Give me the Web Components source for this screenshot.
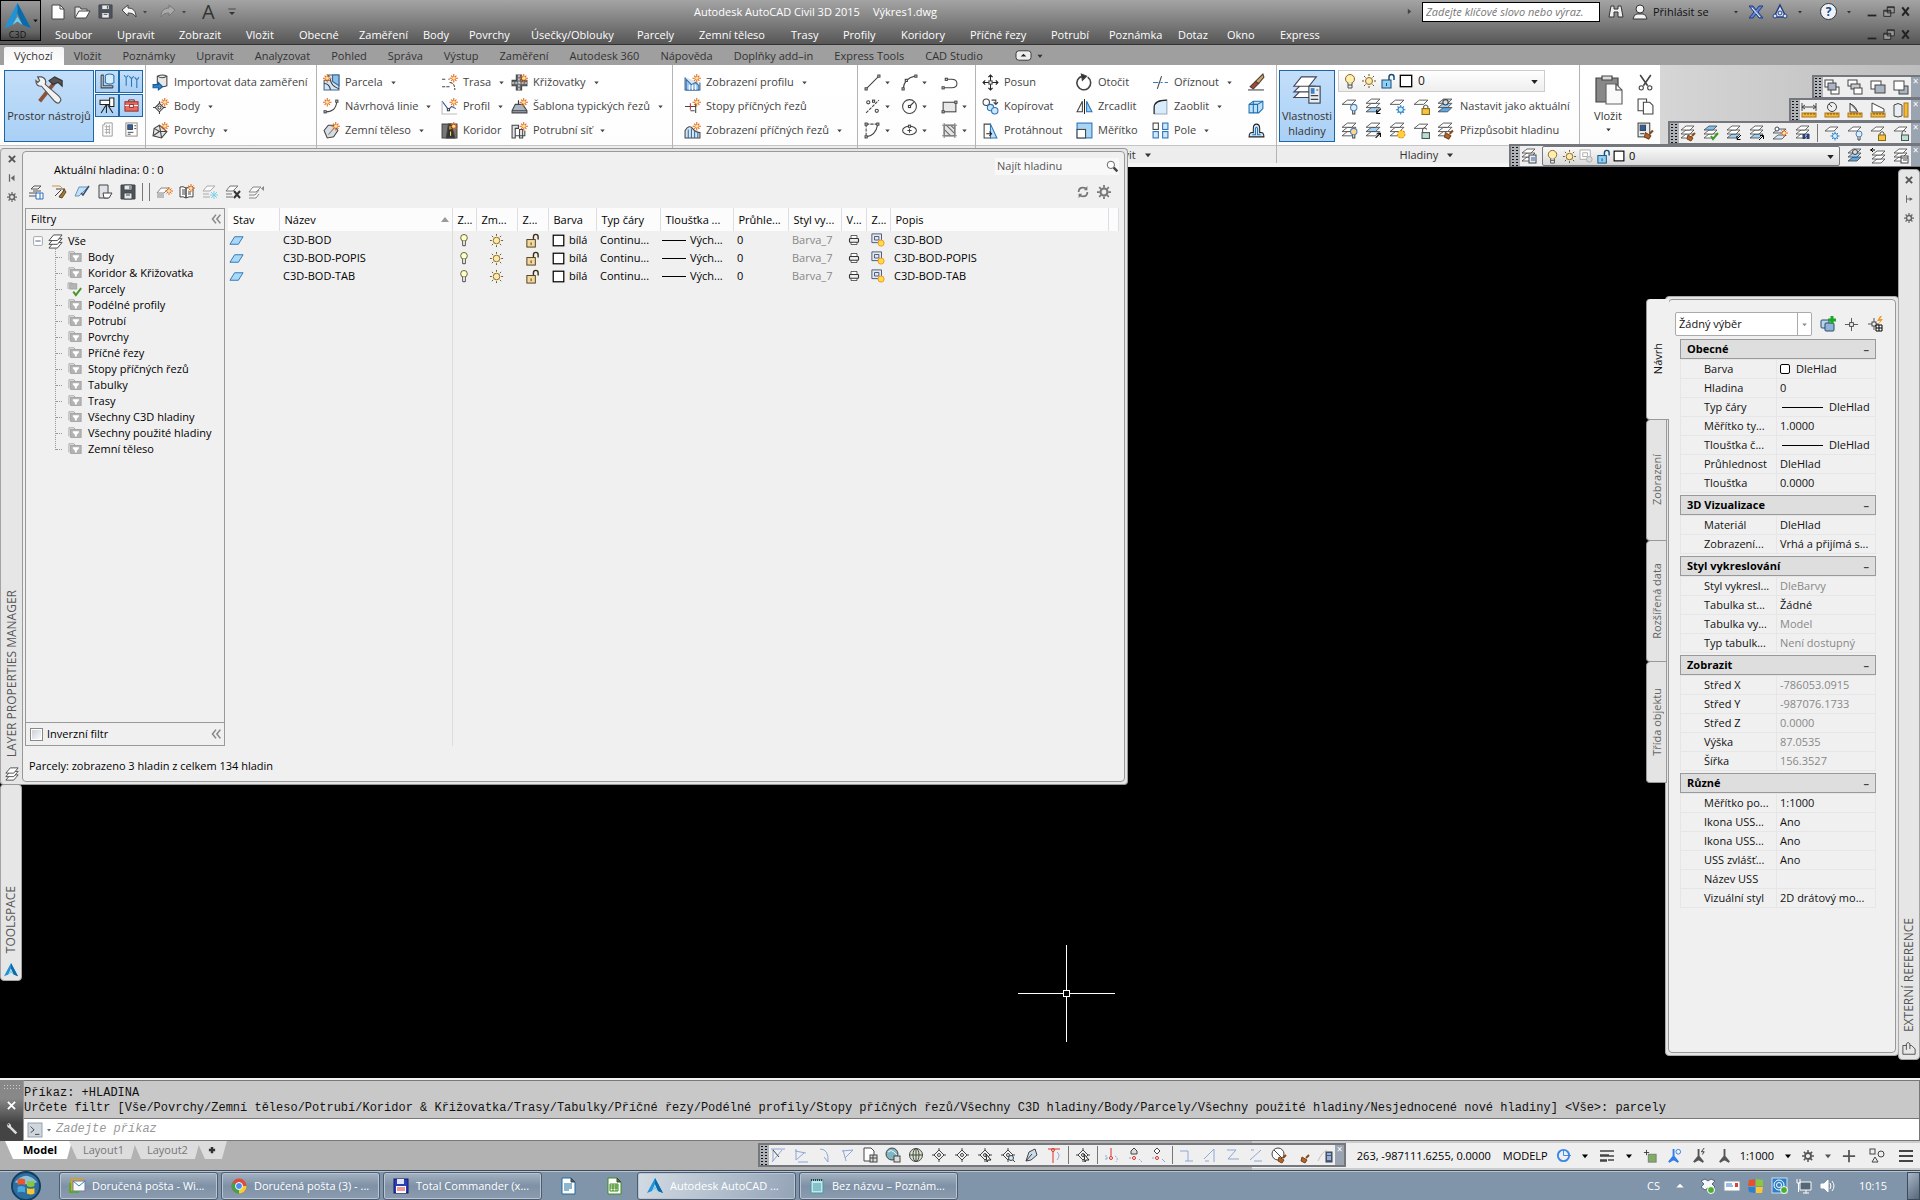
<!DOCTYPE html>
<html lang="cs">
<head>
<meta charset="utf-8">
<title>Autodesk AutoCAD Civil 3D 2015</title>
<style>
    html, body { margin: 0; height: 100%; }
    body { overflow: hidden; background: #000; }
</style>
</head>
<body>
<cad-app></cad-app>

<script>
// ---------- icons ----------
const spark = '<g stroke="#e5661a"><path d="M12 0v8M8 4h8M9.5 1.5l5 5M14.500 1.500l-5 5"/></g><circle cx="12" cy="4" r="1.500" fill="#ffe59a" stroke="none"/>';
const sparkLeft = '<g transform="translate(-8 0)">' + spark + '</g>';
const sheet = (y, f = '#fff') => `<path d="M6 ${y}h8l-4 4H1z" fill="${f}" stroke-width=".8"/>`;
const stack = (a = '#fff', b = '#fff', c = '#fff') => sheet(9, a) + sheet(5, b) + sheet(1, c);
const one = sheet(2);
const lockBadge = '<path d="M10 10V8q2-3 4 0v2" stroke="#555"/><rect x="8.500" y="10" width="7" height="5.500" fill="#f5c443" stroke="#8a6a10"/>';
const openBadge = '<path d="M9 10V7q2-3 4 0" stroke="#555"/><rect x="8.500" y="10" width="7" height="5.500" fill="#bfe0c8" stroke="#456"/>';
const bulbBadge = c => `<circle cx="12" cy="9" r="3" fill="${c}" stroke="#4f7db5"/><path d="M11 12v3h2v-3" fill="#fff"/>`;
const snowBadge = '<g stroke="#2f86cc"><path d="M11 6.500v9M6.500 11h9M8 8l6 6M14 8l-6 6"/><circle cx="11" cy="11" r="2.500" fill="#d7efff"/></g>';
const sunBadge = '<circle cx="11.500" cy="11.500" r="3.500" fill="#ffd23c" stroke="#e88a1c" stroke-dasharray="2 1"/>';
const brushBadge = '<path d="M15 8l-3 3" stroke="#8a4a18" stroke-width="2"/><path d="M8 10l5 3-2 3-4-2z" fill="#b2642a" stroke="#7a4016"/>';
const arrowBadge = '<path d="M15 10l-4 4M11 11v3.500h3.500" stroke="#000"/>';
const arrowUp = '<path d="M10 15l4-4M11 10.500h3.500V14" stroke="#000"/>';
const node = (x, y) => `<rect x="${x - 1}" y="${y - 1}" width="2" height="2" fill="#fff"/>`;
const cross = '<path d="M8 1v14M1 8h14"/><path d="M8 3l5 5-5 5-5-5z" fill="#f4f4f4"/><circle cx="8" cy="8" r="1.500"/>';
const ruler = '<rect x="1" y="11" width="14" height="4" fill="#f5b93a" stroke="#a9741a"/><path d="M4 11v2M7 11v2M10 11v2M13 11v2" stroke="#7a5210"/>';
const faint = s => `<g stroke="#8fa6d8">${s}</g>`;
const ICONS = {
    logo: '<path d="M8 0L0 15l5-2 3-7 3 7 5 2z" fill="#1f93d6" stroke="none"/><path d="M8 0l8 15-5-2-3-7z" fill="#0d6aa8" stroke="none"/><path d="M5 13l3-2 3 2-3-5z" fill="#6fd0f5" stroke="none"/>',
    new: '<path d="M2 1h8l4 4v10H2z" fill="#fff"/><path d="M10 1v4h4"/>',
    open: '<path d="M1 14V3h5l1 2h6v2" fill="#e8e8e8"/><path d="M1 14l4-7h11l-4 7z" fill="#fff"/>',
    save: '<path d="M1 1h14v14H1z" fill="#4b5361"/><path d="M4 1h8v5H4zM4 9h8v6H4z" fill="#e6eaf0"/><path d="M10 2v3M6 11h4"/>',
    undo: '<path d="M1 6l6-5v3c5 0 8 3 8 9-2-3-4-4-8-4v3z" fill="#f4f4f4"/>',
    redo: '<path d="M15 6L9 1v3c-5 0-8 3-8 9 2-3 4-4 8-4v3z" fill="#aaa" stroke="#777"/>',
    down: '<path d="M4 6h8l-4 5z" fill="currentColor" stroke="none"/>',
    downbar: '<path d="M3 4h10" stroke="#333"/><path d="M4 8h8l-4 4z" fill="#333" stroke="none"/>',
    play: '<path d="M5 3l6 5-6 5z" fill="#444" stroke="none"/>',
    min: '<path d="M3 12h10" stroke="#222" stroke-width="2"/>',
    restore: '<path d="M6 2h8v7H6zM2 6h8v7H2z" stroke="#222" fill="#999"/><path d="M6 3h8M2 7h8" stroke="#222"/>',
    close: '<path d="M4 3l8 10M12 3L4 13" stroke="#222" stroke-width="2.500"/>',
    x: '<path d="M3 3l10 10M13 3L3 13" stroke="#555" stroke-width="3"/>',
    pin: '<path d="M4 2v12" stroke="#666" stroke-width="2"/><path d="M12 3v10L6 8z" fill="#666" stroke="none"/>',
    pin2: '<path d="M4 2v12M4 8h8" stroke="#666" stroke-width="1.500"/><path d="M9 5l5 3-5 3z" fill="#666" stroke="none"/>',
    gear: '<circle cx="8" cy="8" r="4" stroke="currentColor" stroke-width="2.500"/><path d="M8 0v3M8 13v3M0 8h3M13 8h3M2.500 2.500l2 2M11.500 11.500l2 2M13.500 2.500l-2 2M2.500 13.500l2-2" stroke="currentColor" stroke-width="2"/>',
    binoc: '<path d="M3 2h3v3h4V2h3l2 11h-5V8H6v5H1z" fill="#eee" stroke="#333"/>',
    user: '<circle cx="8" cy="5" r="4" fill="#f4f4f4" stroke="#333"/><path d="M1 15q1-5 4-5h6q3 0 4 5z" fill="#f4f4f4" stroke="#333"/>',
    xchange: '<path d="M1 2h4l3 4 3-4h4l-5 6 5 6h-4l-3-4-3 4H1l5-6z" fill="#5f82cc" stroke="#1e3d8a"/><path d="M4 4l8 9" stroke="#fff"/>',
    a360: '<path d="M8 1l6 12H2z" fill="#dce6fa" stroke="#27417f" stroke-width="1.500"/><circle cx="8" cy="9" r="2" stroke="#27417f"/><circle cx="3" cy="12" r="2" fill="#dce6fa" stroke="#27417f"/><circle cx="13" cy="12" r="2" fill="#dce6fa" stroke="#27417f"/>',
    tools: '<path d="M3 14L11 4" stroke="#8d5238" stroke-width="2"/><path d="M8 3l3-2 4 2v3l-2-2-3 1z" fill="#555" stroke="#333" stroke-width=".6"/><path d="M2 1l1 2-1 1-1-1q0 3 3 3l7 8q2 2 3 0 1-1-1-3L6 5q1-3-2-4z" fill="#f2f2f2" stroke="#555" stroke-width=".6"/>',
    ts1: '<path d="M2 2v12h11M2 2h2v10h9v2"/><ellipse cx="10" cy="3" rx="4" ry="2" fill="#d7ecfb" stroke="#2a74b8"/><path d="M6 3v6q4 3 8 0V3" fill="#d7ecfb" stroke="#2a74b8"/>',
    ts2: '<path d="M1 2q2 4 4 0M3 4v8M6 3q2 4 4 0M8 5v8M11 4q2 4 4 0M13 6v8" stroke="#2a74b8"/>',
    survey: '<path d="M1 3h9v4H1zM10 1h4v8h-4z" fill="#fff" stroke="#222"/><path d="M7 7L2 15M7 7v8M8 7l5 8" stroke="#222"/>',
    toolbox: '<path d="M5 4V2h6v2" stroke="#7a2020"/><rect x="1" y="4" width="14" height="10" fill="#e86a60" stroke="#8c2c28"/><path d="M1 8h14" stroke="#fff"/><rect x="6" y="7" width="4" height="3" fill="#fff" stroke="#8c2c28"/>',
    pano: '<path d="M3 15V3h2V1h8v14z" fill="#fff" stroke="#999"/><path d="M5 5h6M5 8h6M5 11h6M7 3v10M10 3v10" stroke="#aaa"/>',
    propsw: '<rect x="2" y="1" width="12" height="14" fill="#fff" stroke="#888"/><rect x="4" y="3" width="5" height="5" fill="#2f5fa8"/><path d="M11 4h2M11 7h2M4 11h6M4 13h3"/>',
    import: '<path d="M5 2q5-2 9 0v9q-4 2-9 0z" fill="#e8e8e8"/><path d="M14 2q-4 3-9 0"/><path d="M1 10h5V8l4 4-4 3v-2H1z" fill="#2a86d0" stroke="#1a5c98"/>',
    points: '<path d="M7 3v12M1 9h12"/><path d="M7 5l4 4-4 4-4-4z" fill="#fff"/><circle cx="7" cy="9" r="1.500"/>' + spark,
    surfaces: '<path d="M2 6l5-3 7 6-5 6-8-2z" fill="#e6e6e6"/><path d="M7 3l2 12M2 6l5 3 7 0M1 13l6-4"/>' + spark,
    parcel: '<path d="M1 6h4V1h10v14H1z" fill="#d4e6f4" stroke="#38678f"/><path d="M1 9q5 0 6 6M7 5q0 6 8 9" stroke="#333"/><path d="M9 1v6l6 4V1z" fill="#8cc0ea" stroke="#38678f"/>' + sparkLeft,
    feature: '<path d="M1 13q11 1 12-10"/>' + node(13, 3) + node(2, 13) + sparkLeft,
    grading: '<path d="M1 8l4-5h5l4 5-4 6-6 1z" fill="#d9dde2"/><path d="M5 12l6-7" stroke="#888"/>' + spark,
    align: '<path d="M1 5h4M7 5h1M8 8q5 0 5 7" stroke-dasharray="3 1"/><path d="M1 12h8" stroke-dasharray="3 1"/>' + spark,
    profile: '<path d="M1 3l6 8 3-3 4 2" stroke="#2a5fa8"/><path d="M1 3v12h14" stroke="#bbb"/>' + node(7, 11) + spark,
    corridor: '<path d="M1 2h14v13H1z" fill="#777"/><path d="M5 15l2-13h3l3 13z" fill="#333"/><path d="M8.500 4v3M9 9v4" stroke="#ffe14a"/>' + spark,
    intersect: '<path d="M5 1h5v5h5v5h-5v4H5v-4H1V6h4z" fill="#63686e"/><path d="M7.500 1v14M1 8.500h14" stroke="#fff" stroke-dasharray="2 1"/>' + spark,
    assembly: '<path d="M7 2v10" stroke="#333"/><path d="M1 12l3-6h7l4 6v2H1z" fill="#a7b5c4"/><path d="M1 12h14"/>' + spark,
    pipes: '<path d="M1 3h6v3H4v9H1zM8 7h3v8H8z" fill="#dfe5ea"/><path d="M4 13h9V8"/>' + spark,
    profview: '<path d="M1 3v12h14V8" fill="#d5e6f5" stroke="#39699c"/><path d="M2 5l5 5 4-2 3 3v4H2z" fill="#9cc5e8" stroke="#39699c"/><path d="M5 10v5M8 10v5M11 10v5" stroke="#fff"/>' + spark,
    sample: '<path d="M1 8h10M11 4v10M6 12h4"/><path d="M6 5v6" stroke="#c33"/>' + spark,
    secview: '<path d="M1 15V8q4-6 7-2t7 4v5z" fill="#d5e6f5"/><path d="M4 7v8M7 6v9M10 8v7M13 9v6" stroke="#39699c"/>' + spark,
    line: '<path d="M2 14L14 2"/>' + node(2, 14) + node(14, 2),
    arc: '<path d="M2 14Q3 4 13 2"/>' + node(2, 14) + node(5, 6) + node(14, 2),
    pline: '<path d="M2 13h8q5 0 5-4t-5-4H4"/>' + node(2, 13) + node(5, 5),
    div: '<path d="M2 14L14 2" stroke-dasharray="3 1"/><circle cx="4" cy="4" r="1.500"/><circle cx="12" cy="12" r="1.500"/>' + node(9, 3),
    circle: '<circle cx="8" cy="8" r="6.500"/><path d="M8 8l4-4"/>' + node(8, 8),
    rect: '<rect x="2" y="4" width="12" height="9" fill="#e8e8e8"/>' + node(14, 4) + node(2, 13),
    spline: '<path d="M2 2h11M2 2v11" stroke-dasharray="3 1"/><path d="M2 14q9-1 11-12"/>' + node(2, 2) + node(13, 2) + node(2, 14),
    ellipse: '<ellipse cx="8" cy="8" rx="6.500" ry="4"/><path d="M8 6v4M6 8h4"/>' + node(8, 4),
    hatch: '<rect x="3" y="3" width="10" height="10" fill="#e4e4e4"/><path d="M3 7l6 6M5 3l8 8M9 3l4 4" stroke="#666"/><path d="M1 3h14M3 1v14M13 1v14M1 13h14" stroke="#888"/>',
    move: '<path d="M8 1v14M1 8h14M6 3l2-2 2 2M6 13l2 2 2-2M3 6L1 8l2 2M13 6l2 2-2 2" stroke="#222"/><rect x="6.500" y="6.500" width="3" height="3" fill="#fff"/>',
    rotate: '<path d="M6 2a6.500 6.500 0 1 0 5 1" stroke-width="1.500"/><path d="M5 0l5 2-4 4z" fill="#333"/>',
    trim: '<path d="M1 8h5M8 8h2M12 8h3" stroke="#3a78b8"/><path d="M9 2L5 14"/>',
    erase: '<path d="M14 0l1 3-5 6-3-2z" fill="#d9a35a"/><path d="M7 7l3 2-5 5-3-2z" fill="#b4422a"/><path d="M0 15h15"/>',
    copy: '<circle cx="4" cy="4" r="3" fill="#fff"/><circle cx="8" cy="9" r="3" fill="#cfe8fb" stroke="#2a74b8"/><circle cx="12" cy="12" r="3" fill="#cfe8fb" stroke="#2a74b8"/><path d="M9 2h4v3M11 4l2 2 2-2"/>',
    mirror: '<path d="M8 1v14" stroke="#222"/><path d="M6 3v10H1z" fill="#fff"/><path d="M10 3v10h5z" fill="#9fd0f5" stroke="#2a74b8"/>',
    fillet: '<path d="M2 15V9q0-7 12-7v13z" fill="#d9ecfb" stroke="#9ab"/><path d="M2 15V9q0-7 12-7" stroke="#222"/>',
    explode: '<path d="M1 6l4-3h9v7l-4 4H1z" fill="#bfe2fa" stroke="#1f6fb0"/><path d="M1 6h8v8M9 6l5-3M5 3v11" stroke="#1f6fb0"/>',
    stretch: '<path d="M2 2h6v13H2z" fill="#fff"/><path d="M8 2l6 13H8z" fill="#bfe2fa" stroke="#2a74b8"/><path d="M4 11h5M7 9l2 2-2 2" stroke="#222"/>',
    scale: '<rect x="1" y="1" width="14" height="14" fill="#a9d4f4" stroke="#2a74b8"/><rect x="1" y="7" width="8" height="8" fill="#fff"/>',
    array: '<g fill="#fff"><rect x="1" y="1" width="5" height="6"/><g fill="#cfe8fb" stroke="#2a74b8"><rect x="10" y="1" width="5" height="6"/><rect x="1" y="9" width="5" height="6"/><rect x="10" y="9" width="5" height="6"/></g></g>',
    offset: '<path d="M1 14h14q0-5-4-4V6q0-4-3-4T5 6v4q-4-1-4 4z" fill="#cfe8fb" stroke="#222"/><path d="M4 12h3V6q1-2 2 0v6h3" stroke="#2a74b8"/>',
    layprops: '<g stroke="#445" stroke-width=".6"><path d="M4 9h8l-3 3H1zM4 6h8l-3 3H1zM5 1h8L9 6H1z" fill="#fff"/></g><rect x="9" y="6" width="6" height="9" fill="#e9eef4" stroke="#345" stroke-width=".6"/><rect x="10" y="7" width="2" height="3" fill="#3f7fc4" stroke="none"/><path d="M13 8h1M10 11h4M10 13h4" stroke-width=".6"/>',
    bulb: '<circle cx="8" cy="6" r="4.500" fill="#ffeeb0" stroke="#8a6a20"/><path d="M6 10v5h4v-5" fill="#eee" stroke="#555"/><path d="M6 12h4"/>',
    sun: '<circle cx="8" cy="8" r="3.500" fill="#ffe9a8" stroke="#8a6a20"/><path d="M8 1v2M8 13v2M1 8h2M13 8h2M3 3l1.500 1.500M11.500 11.500L13 13M13 3l-1.500 1.500M3 13l1.500-1.500" stroke="#6a5520"/>',
    lock: '<path d="M9 7V4q0-2.500 2.500-2.500T14 4v3" stroke="#3b2f14" stroke-width="1.500"/><rect x="2" y="7" width="9" height="8" fill="#f3d9a0" stroke="#4a3a14"/><path d="M6.500 10v3" stroke="#4a3a14"/>',
    lockb: '<path d="M9 7V4q0-2.500 2.500-2.500T14 4v3" stroke="#174c78" stroke-width="1.500"/><rect x="2" y="7" width="9" height="8" fill="#8fd0f5" stroke="#174c78"/><path d="M6.500 10v3" stroke="#174c78"/>',
    white: '<rect x="1.500" y="1.500" width="13" height="13" fill="#fff" stroke="#000" stroke-width="1.500"/>',
    l1: one + bulbBadge('#d7efff'), l2: stack('#9fd0f5') + arrowBadge, l3: one + snowBadge, l4: one + lockBadge,
    l5: stack('#5aa7e6', '#9fd0f5', '#cfe8fb') + '<circle cx="8" cy="4" r="2.500" fill="#ddd"/>',
    m1: stack() + bulbBadge('#ffd98a'), m2: stack('#fff', '#9fd0f5') + arrowUp, m3: stack() + sunBadge, m4: one + openBadge, m5: stack() + brushBadge,
    l6: stack('#fff', '#fff', '#7fc0ef') + '<path d="M8 11l2 3 5-6" stroke="#3c9a28" stroke-width="2"/>',
    l7: stack('#9fd0f5', '#fff', '#fff') + arrowUp,
    l8: sheet(10, '#cfe8fb') + sheet(4, '#cfe8fb') + '<circle cx="5" cy="4" r="2" fill="#fff"/><g transform="translate(0 4)">' + spark + '</g>',
    l9: stack() + '<path d="M9 9v5M13 9v5" stroke="#26427a" stroke-width="3"/>',
    l10: stack() + '<rect x="8" y="7" width="7" height="8" fill="#e9eef4"/><path d="M10 10h4M10 12h4" stroke="#2a5fa8"/>',
    l11: '<g transform="translate(1 2)">' + stack() + '</g><path d="M0 2h5M3 0L1 2l2 2" stroke="#000"/>',
    l12: stack() + '<rect x="8" y="8" width="7" height="7" fill="#fff"/><path d="M8 10h7M10 12h4"/>',
    paste: '<path d="M2 2h11v12H2z" fill="#888" stroke="#444" stroke-width=".6"/><path d="M5 1h5v2H5z" fill="#ddd" stroke-width=".6"/><path d="M7 5h5l3 3v7H7z" fill="#fafafa" stroke="#666" stroke-width=".6"/><path d="M12 5v3h3" stroke-width=".6"/>',
    cut: '<path d="M3 1l7 10M13 1L6 11" stroke-width="1.500"/><circle cx="4" cy="13" r="2"/><circle cx="12" cy="13" r="2"/>',
    copyclip: '<path d="M1 1h8v11H1z" fill="#fff"/><path d="M6 4h6l3 3v8H6z" fill="#fff"/>',
    match: '<rect x="1" y="1" width="11" height="13" fill="#e9eef4"/><rect x="3" y="3" width="5" height="5" fill="#2a5fa8"/><path d="M3 11h4"/>' + brushBadge,
    o1: '<rect x="1" y="1" width="8" height="7" fill="#fff"/><rect x="7" y="8" width="8" height="7" fill="#fff"/><rect x="4" y="4" width="8" height="7" fill="#aab4c2"/>',
    o2: '<rect x="1" y="1" width="9" height="6" fill="#fff"/><rect x="4" y="5" width="9" height="5" fill="#c8ced6"/><rect x="7" y="9" width="8" height="6" fill="#fff"/>',
    o3: '<rect x="1" y="2" width="10" height="8" fill="#fff"/><rect x="5" y="6" width="10" height="8" fill="#aab4c2"/>',
    o4: '<rect x="6" y="7" width="9" height="8" fill="#aab4c2"/><rect x="1" y="2" width="10" height="9" fill="#fff"/>',
    q1: '<path d="M1 1v8M15 1v8M1 5h14M4 3L1 5l3 2M12 3l3 2-3 2"/>' + ruler,
    q2: '<circle cx="8" cy="5" r="4.500"/><path d="M8 5L5 2"/>' + ruler, q3: '<path d="M3 10V1l8 9zM3 2q5 1 7 7"/>' + ruler,
    q4: '<path d="M2 10V1l12 6v3z" fill="#fff"/>' + ruler,
    q5: '<path d="M1 3q4-3 8 0v11q-4 2-8 0z" fill="#e8eef4"/><rect x="11" y="1" width="4" height="14" fill="#f5b93a" stroke="#a9741a"/>',
    vp: '<path d="M1 1h11v10H1zM4 4h5v4H4z" fill="#fff" stroke="#aaa"/><circle cx="11" cy="11" r="3" fill="#ddd" stroke="#aaa"/>',
    t1: '<path d="M6 2h7l-3 3H3zM5 7h8M1 12h7M1 9h8" stroke="#555" fill="#f4f4f4"/><path d="M8 9h7v6H8zM12 9v6" stroke="#2a6fc0" fill="#fff"/>',
    t2: '<path d="M1 2h8l2 2" stroke="#c79a3a"/><path d="M5 5h9l-6 8M4 12l6-6"/><path d="M13 5l2 3-4 6-3-1 4-5z" fill="#a8763a" stroke="#6b4a1e"/>',
    t3: '<path d="M5 3h9l-9 9H1z" fill="#bfe2fa" stroke="#6c93b5"/><path d="M7 9l2 2 6-9" stroke="#38506e" stroke-width="1.500"/>',
    t4: '<path d="M2 1h9v13H2z" fill="#dfe3e8"/><path d="M6 9h9l-3 5H7z" fill="#fff"/>',
    n1: '<path d="M5 4h8l-5 5H1zM1 11h7M1 13h7" fill="#fafafa" stroke="#888"/><g transform="translate(1 3)">' + spark + '</g>',
    n2: '<path d="M1 3q3-1 6 1v10q-3-2-6-1zM7 4q3-2 7-1v10q-4-1-7 1z" fill="#fff"/><path d="M3 6h3M3 8h3M3 10h3M9 8h3M9 10h3"/>' + spark,
    n3: '<g stroke="#aaa"><path d="M5 2h8l-5 5H1zM1 10h6M1 13h7" fill="#fafafa"/></g><g stroke="#7fd0ea"><path d="M12 7v8M8 11h8M9 8l6 6M15 8l-6 6"/></g>',
    n4: '<path d="M5 2h8l-5 5H1zM1 10h6M1 13h7" fill="#fafafa" stroke="#777"/><path d="M9 7l6 7M15 7l-6 7" stroke="#333" stroke-width="2"/>',
    n5: '<path d="M5 3h8l-5 5H1zM1 11h6l4-5M1 14h7l3-4" fill="#fafafa" stroke="#888"/><path d="M16 2v5l-3-2.500z" fill="#888" stroke="none"/>',
    search: '<circle cx="6" cy="6" r="4.500" fill="#fff" stroke="#444"/><path d="M9.500 9.500L14 14" stroke="#444" stroke-width="3"/>',
    refresh: '<path d="M3 8q0-5 5-5 3 0 4 2M13 8q0 5-5 5-3 0-4-2" stroke="#777" stroke-width="2"/><path d="M13 1v5H9zM3 15v-5h4z" fill="#777" stroke="none"/>',
    dbl: '<path d="M8 3L4 8l4 5M13 3L9 8l4 5" stroke="#888" stroke-width="1.800"/>',
    minusbox: '<rect x="3" y="3" width="10" height="10" rx="1" fill="#fff" stroke="#999"/><path d="M5 8h6" stroke="#34558b"/>',
    layers: '<path d="M6 9h9l-5 6H1z" fill="#fff"/><path d="M6 5h9l-5 6H1z" fill="#fff"/><path d="M6 1h9l-5 6H1z" fill="#fff"/>',
    folder: '<path d="M1 12V2h6l1 2" stroke="#a5a5a5" fill="#e4e4e4"/><rect x="3" y="4" width="12" height="9" fill="#b4b4b4" stroke="#a0a0a0"/><path d="M5.500 6h7v1.500L10 10v2H8v-2L5.500 7.500z" fill="#fff" stroke="none"/>',
    folderok: '<path d="M0 8V1h5l1 1" stroke="#a5a5a5" fill="#e4e4e4"/><rect x="2" y="2" width="8" height="6" fill="#b4b4b4" stroke="#a0a0a0"/><path d="M6 11l3 4 6-8" stroke="#46952a" stroke-width="2.200"/>',
    status: '<path d="M6 4h9l-5 8H1z" fill="#a9d9f7" stroke="#2a74b8"/>',
    rowbulb: '<circle cx="8" cy="5.500" r="3.800" fill="#ffffc8" stroke="#55502a"/><path d="M6.500 9v5.500h3V9" fill="#fff" stroke="#333"/>',
    printer: '<path d="M4 6V2h8v4M4 10v4h8v-4" fill="#fff" stroke="#333"/><rect x="2" y="6" width="12" height="5" rx="1" fill="#eee" stroke="#333" stroke-width="1.500"/>',
    vpfreeze: '<path d="M1 1h11v10H1zM4 4h5v4H4z" fill="#e4e8f0" stroke="#3d4c6a"/><circle cx="11.500" cy="11.500" r="3.500" fill="#ffdc4a" stroke="#f0901c"/>',
    pick: '<rect x="1" y="4" width="8" height="8" rx="1" fill="#bcd4ea" stroke="#27496f"/><rect x="5" y="7" width="9" height="8" rx="1" fill="#8fb4da" stroke="#27496f"/><path d="M12 0v8M8 4h8" stroke="#1fa52d" stroke-width="3"/>',
    sel: '<path d="M8 1v5M8 10v5M1 8h5M10 8h5" stroke="#555"/><rect x="6" y="6" width="4" height="4"/>',
    qsel: '<path d="M7 2v4M7 10v4M1 8h4M9 8h3" stroke="#555"/><rect x="5" y="6" width="4" height="4"/><path d="M13 0l-3 5h3l-2 4 5-6h-3l2-3z" fill="#f29a2a" stroke="none"/><path d="M9 9h6v6H9zM9 12h6M12 9v6" stroke="#000" fill="#fff"/>',
    extref: '<path d="M5 4H1v10h14V8l-4-4H9" stroke="#444"/><path d="M5 9V2q2-3 4 0v6" stroke="#444"/>',
    b1: faint('<path d="M1 2h14M3 2v12M2 15L12 3"/>') + '<path d="M3 3l6 7" stroke="#444"/>', b2: faint('<path d="M3 2v11M2 4l11 2M3 13l8-7M5 15h10"/>'),
    b3: faint('<path d="M4 2q9 0 8 13l-4-5"/>'), b4: faint('<path d="M4 3l3 11M3 4l11-1-8 8"/>'),
    b5: '<path d="M2 1h7l3 3v10H2z" fill="#fff"/><rect x="8" y="8" width="7" height="7" fill="#ddd"/><path d="M8 11h7M11 8v7"/>',
    b6: '<circle cx="7" cy="7" r="6" fill="#7fb6c4"/><path d="M3 5q3-3 6 0t3 3" stroke="#e8f4f8"/><rect x="9" y="9" width="6" height="6" fill="#ddd"/>',
    b7: '<circle cx="8" cy="8" r="6.500" fill="#d9e6cc"/><ellipse cx="8" cy="8" rx="3" ry="6.500"/><path d="M1.500 8h13M8 1.500v13"/>',
    cross: cross, cross2: cross + '<path d="M9 7l5 6h-3l-1 2z" fill="#fff" stroke="#222"/>', cross3: cross + '<circle cx="11" cy="11" r="2.500" fill="#cfe8fb"/><path d="M13 13l2 2"/>',
    b8: '<path d="M3 14l3-9 6-3 2 6-6 5z" fill="#c9dcec"/><path d="M3 14l6-7"/>',
    b9: '<path d="M2 2h12M7 4v12" stroke="#d8352c"/><circle cx="7" cy="3" r="1.500" stroke="#d8352c"/>' + faint('<path d="M11 5q4 3 0 8"/>'),
    b10: '<path d="M7 1v8" stroke="#d8352c"/><circle cx="7" cy="11" r="1.500" stroke="#d8352c"/>' + faint('<path d="M2 11h2M11 9q4 2 1 6M2 8v5" stroke-dasharray="2 1"/>'),
    b11: '<path d="M4 7V4l3-3 3 3v3z" fill="#ddd"/><circle cx="7" cy="11" r="1.500" stroke="#d8352c"/>' + faint('<path d="M2 11h2M12 12l3 3" stroke-dasharray="2 1"/>'),
    b12: '<path d="M7 1l3 3-3 3-3-3z" fill="#fff"/><circle cx="7" cy="11" r="1.500" stroke="#d8352c"/>' + faint('<path d="M2 11h2M12 12l3 3"/>'),
    b13: faint('<path d="M1 4h8v10M6 14h8"/>'), b14: faint('<path d="M2 12L12 2v13M3 14h4"/>'), b15: faint('<path d="M2 3h9L3 12h11"/>'), b16: faint('<path d="M3 3l3 0M2 13L13 3M6 14h8"/>'),
    b17: '<circle cx="7" cy="7" r="6" fill="#fff"/><path d="M3 3l8 8"/>' + brushBadge, b18: brushBadge,
    b19: '<path d="M1 14q4-9 9-11" stroke="#c4c4c4"/><rect x="9" y="5" width="6" height="10" fill="#3d5f9c"/><path d="M10 7h4M10 10h4M10 12h4" stroke="#fff"/>',
    snap: '<circle cx="8" cy="8" r="6" stroke="#3a86e8" stroke-width="2"/><path d="M8 8h8M8 2v6" stroke="#3a86e8"/>',
    lw: '<path d="M1 3h14M1 7h9M1 8h9M1 12h7M1 13h7M9 8h6M9 12h6" stroke="#444" stroke-width="1.500"/>',
    cyc: '<path d="M1 4h6M4 1v6" stroke="#333"/><rect x="6" y="6" width="9" height="9" fill="#7fae63" stroke="#777"/>',
    ann: '<path d="M8 1v8l5 6-5-3-5 3 5-6z" fill="#555" stroke="#555" stroke-width="2"/>',
    annb: '<path d="M7 1v8l5 6-5-3-5 3 5-6z" fill="#2f7fe6" stroke="#2f7fe6" stroke-width="2"/><circle cx="12" cy="4" r="2.500" stroke="#2f7fe6"/>',
    anna: '<path d="M7 1v8l5 6-5-3-5 3 5-6z" fill="#555" stroke="#555" stroke-width="2"/><path d="M13 0l-3 4h3l-2 3" stroke="#333"/>',
    plus: '<path d="M8 1v14M1 8h14" stroke="#555" stroke-width="2"/>',
    iso: '<rect x="1" y="1" width="5" height="5"/><circle cx="12" cy="6" r="3"/><path d="M3 14l3-5 3 5z"/>',
    burger: '<path d="M1 3h14M1 8h14M1 13h14" stroke="#444" stroke-width="2"/>',
    wrench: '<path d="M2 2l1 4 2 1 7 7 2-2-7-7q0-4-4-4l2 2-1 1z" fill="#ddd" stroke="none"/>',
    prompt: '<rect x="0" y="0" width="16" height="16" fill="#cfd6de" stroke="#8b97a5"/><path d="M3 4l4 4-4 3M8 13h5" stroke="#333"/>',
    add: '<path d="M8 3v10M3 8h10" stroke="#333" stroke-width="4"/>',
    orb: '<circle cx="8" cy="8" r="7.500" fill="#2c6f9f" stroke="#143c5e"/><path d="M2 6q6-7 12 0-6 2-12 0z" fill="#8fc1df" stroke="none"/><path d="M3.500 4.500q2-1 4 0v3q-2-1-4 0z" fill="#e9562c" stroke="none"/><path d="M8.500 5q2 1 4 0v3q-2 1-4 0z" fill="#8cc63e" stroke="none"/><path d="M3.500 8.500q2-1 4 0v3q-2-1-4 0z" fill="#4aa6e0" stroke="none"/><path d="M8.500 9q2 1 4 0v3q-2 1-4 0z" fill="#fbc72e" stroke="none"/>',
    outlook: '<rect x="2" y="1" width="12" height="12" fill="#d9a92a" stroke="#c7a12a"/><rect x="4" y="3" width="12" height="10" fill="#f7fbff" stroke="#77a"/><path d="M4 3l6 5 6-5" stroke="#38a"/><path d="M1 5v9h9" stroke="#5a3" stroke-width="2"/>',
    chrome: '<circle cx="8" cy="8" r="7.500" fill="#dd4b3a" stroke="none"/><path d="M8 8L1.500 4.500A7.500 7.500 0 0 0 8 15.500z" fill="#3fa34c" stroke="none"/><path d="M8 8h7.500A7.500 7.500 0 0 1 8 15.500z" fill="#f7cf2e" stroke="none"/><circle cx="8" cy="8" r="3.500" fill="#4a8cf0" stroke="#fff"/>',
    floppy: '<rect x="1" y="1" width="14" height="14" fill="#2840b4" stroke="#111a66"/><rect x="4" y="1" width="7" height="5" fill="#dfe4f8" stroke="none"/><rect x="3" y="8" width="10" height="7" fill="#fff" stroke="none"/><path d="M4 10h8M4 12h8" stroke="#d33"/>',
    writer: '<path d="M2 0h9l4 4v12H2z" fill="#fff" stroke="#1d6d9e"/><path d="M11 0v4h4z" fill="#1d6d9e"/><path d="M4 6h8M4 8h8M4 10h8M4 12h5" stroke="#1d6d9e"/>',
    calc: '<path d="M2 0h9l4 4v12H2z" fill="#fff" stroke="#3a8c1c"/><path d="M11 0v4h4z" fill="#3a8c1c"/><path d="M4 6h8v7H4zM4 8h8M4 10h8M7 6v7M10 6v7" stroke="#3a8c1c"/>',
    notepad: '<rect x="2" y="2" width="12" height="13" fill="#bfe8ec" stroke="#4b9aa4"/><path d="M4 6h8M4 8h8M4 10h8M4 12h8" stroke="#4b9aa4"/><path d="M2 2h12" stroke="#333" stroke-width="2" stroke-dasharray="1 1"/>',
    dropbox: '<path d="M1 3l4-2 3 2 3-2 4 2-3 3 3 3-4 3-3-2-3 2-4-3 3-3z" fill="#f5f8fb" stroke="#567"/><circle cx="11" cy="12" r="3.500" fill="#4caf30" stroke="#fff"/>',
    mail: '<rect x="0" y="3" width="16" height="10" fill="#fff" stroke="#89a"/><path d="M2 6h6M2 8h7" stroke="#3a78c8"/><rect x="11" y="5" width="3" height="4" fill="#d8442e" stroke="none"/>',
    avg: '<path d="M1 2l6-1v7H0z" fill="#e4522c" stroke="none"/><path d="M8 1l7 1v6H8z" fill="#8cc63e" stroke="none"/><path d="M0 9h7v6l-6-1z" fill="#2e7fd0" stroke="none"/><path d="M8 9h7l-1 6H8z" fill="#fbc72e" stroke="none"/>',
    sync: '<rect x="0" y="0" width="15" height="15" fill="#2c7fc8" stroke="#cde"/><circle cx="7" cy="7" r="5" stroke="#fff"/><circle cx="7" cy="7" r="2.500" stroke="#fff"/><circle cx="12" cy="12" r="3.500" fill="#4caf30" stroke="#fff"/>',
    net: '<path d="M4 4h11v8H4z" fill="#567" stroke="#fff"/><path d="M7 15h6M10 12v3M1 1v4h3V1M2.500 5v9" stroke="#fff"/>',
    sound: '<path d="M1 6h3l4-4v12l-4-4H1z" fill="#fff" stroke="#fff"/><path d="M10 5q2 3 0 6M12 3q4 5 0 10" stroke="#fff"/>',
    up: '<path d="M3 10h10L8 5z" fill="#fff" stroke="none"/>',
    panelup: '<rect x="0" y="3" width="16" height="10" rx="3" fill="#eee" stroke="#333"/><path d="M5 9h6L8 6z" fill="#222" stroke="none"/>'
};

const BASE = `
    <style>
        :host { box-sizing: border-box; font: 11px/16px "Open Sans", "Noto Sans", sans-serif; color: #222; }
        *, *::before { box-sizing: border-box; }
        button, select, input { font: inherit; color: inherit; background: none; border: 0; margin: 0; padding: 0; outline: 0; border-radius: 0; }
        select { appearance: none; }
        button { display: flex; align-items: center; white-space: nowrap; text-align: left; }
        a { color: inherit; text-decoration: none; }
        cad-icon { flex: none; }
    </style>
`;

class CadElement extends HTMLElement {
    connectedCallback() {
        if (this.shadowRoot) return;
        this.attachShadow({ mode: "open" }).innerHTML = BASE + this.view();
    }
    attr(name, fallback = "") {
        return this.getAttribute(name) || fallback;
    }
}

const icon = (name, size = 16) => `<cad-icon name="${name}" size="${size}"></cad-icon>`;
const iconButton = (name, size = 16) => `<button type="button" aria-label="${name}">${icon(name, size)}</button>`;

class CadIcon extends CadElement {
    view() {
        const size = this.attr("size", "16");
        return `
        <style>
            :host { display: block; width: ${size}px; height: ${size}px; color: inherit; }
            svg { display: block; width: 100%; height: 100%; overflow: visible; }
        </style>
        <svg viewBox="0 0 16 16" fill="none" stroke="#444" aria-hidden="true">${ICONS[this.attr("name")]}</svg>
        `;
    }
}

// one small ribbon command: icon, label and optional drop arrow
class CadTool extends CadElement {
    view() {
        return `
        <style>
            :host { display: block; height: 24px; color: #444; }
            button { height: 24px; gap: 5px; }
            button > cad-icon:last-child { margin-left: ${this.hasAttribute("plain") ? "-3px" : "1px"}; }
        </style>
        <button type="button" aria-label="${this.attr("icon")}">${icon(this.attr("icon"), 17)}<slot></slot>${this.hasAttribute("arrow") ? icon("down", 9) : ""}</button>
        `;
    }
}

class CadPanel extends CadElement {
    view() {
        const label = this.attr("label");
        return `
        <style>
            :host { display: flex; flex-direction: column; flex: none; height: 98px; border-right: 1px solid #b4b4b4; }
            .body { flex: 1; padding: 5px 0 3px 6px; background: linear-gradient(#fff, #fdfdfd); }
            .label { height: 18px; display: flex; justify-content: center; align-items: center; gap: 6px; background: #ededed; border-top: 1px solid #c4c4c4; color: #333; }
        </style>
        <div class="body"><slot></slot></div>
        <div class="label">${label ? label + icon("down", 12) : ""}</div>
        `;
    }
}

class CadTitle extends CadElement {
    view() {
        const menu = ["Soubor", "Upravit", "Zobrazit", "Vložit", "Obecné", "Zaměření", "Body", "Povrchy", "Úsečky/Oblouky", "Parcely", "Zemní těleso", "Trasy", "Profily", "Koridory", "Příčné řezy", "Potrubí", "Poznámka", "Dotaz", "Okno", "Express"];
        const win = iconButton("min", 14) + iconButton("restore", 14) + iconButton("close", 13);
        return `
        <style>
            :host { display: flex; height: 45px; flex: none; background: linear-gradient(#a4a4a4, #828282 45%, #565656); border-bottom: 1px solid #333; color: #fff; }
            .app { width: 41px; height: 41px; flex-direction: column; border: 1px solid #000; background: linear-gradient(#999, #666 80%, #444); color: #111; font-size: 9px; line-height: 10px; position: relative; padding: 2px 6px 0 0; }
            .app cad-icon + cad-icon { position: absolute; right: 0; top: 15px; }
            .rows { flex: 1; min-width: 0; }
            .row { display: flex; align-items: center; height: 23px; position: relative; }
            .qat { display: flex; align-items: center; gap: 8px; padding-left: 9px; width: 653px; color: #444; }
            .qat b { font: 20px/20px "Open Sans", sans-serif; color: #333; margin: 0 3px; }
            .qat .pair { display: flex; align-items: center; gap: 4px; margin-right: 3px; }
            .title { font-size: 11px; display: flex; gap: 13px; flex: 1; }
            .help { display: flex; align-items: center; gap: 8px; padding-right: 4px; color: #333; }
            input { width: 178px; height: 20px; border: 1px solid #000; background: #fff; padding: 0 3px; }
            input::placeholder { color: #777; font-style: italic; }
            .sign { color: #111; gap: 5px; width: 92px; }
            .q { width: 17px; height: 17px; border-radius: 50%; background: #eef3fb; border: 1px solid #333; color: #23427e; justify-content: center; font-weight: bold; font-size: 12px; margin-left: 8px; }
            .win { display: flex; gap: 3px; width: 51px; }
            .help .win { margin-left: 4px; }
            nav { display: grid; grid-template-columns: 62px 62px 67px 53px 60px 64px 46px 62px 106px 62px 92px 52px 58px 69px 81px 58px 69px 49px 53px 60px; padding-left: 14px; flex: 1; white-space: nowrap; }
            .menu { padding-right: 4px; }
        </style>
        <button type="button" class="app">${icon("logo", 27)}${icon("down", 9)}<span>C3D</span></button>
        <div class="rows">
            <div class="row">
                <div class="qat">
                    ${iconButton("new")}${iconButton("open")}${iconButton("save", 15)}
                    <span class="pair">${iconButton("undo")}${icon("down", 8)}</span>
                    <span class="pair">${iconButton("redo")}${icon("down", 8)}</span><b>A</b>${icon("downbar", 12)}
                </div>
                <div class="title"><span>Autodesk AutoCAD Civil 3D 2015</span><span>Výkres1.dwg</span></div>
                <div class="help">
                    ${icon("play", 9)}
                    <input type="search" aria-label="Vyhledat" placeholder="Zadejte klíčové slovo nebo výraz.">
                    ${iconButton("binoc")}
                    <button type="button" class="sign">${icon("user")}Přihlásit se</button>
                    ${icon("down", 8)}${iconButton("xchange")}${iconButton("a360")}${icon("down", 8)}
                    <button type="button" class="q">?</button>${icon("down", 8)}
                    <div class="win">${win}</div>
                </div>
            </div>
            <div class="row menu">
                <nav>${menu.map(m => `<a href="#">${m}</a>`).join("")}</nav>
                <div class="win">${win}</div>
            </div>
        </div>
        `;
    }
}

class CadTabs extends CadElement {
    view() {
        const tabs = ["Výchozí", "Vložit", "Poznámky", "Upravit", "Analyzovat", "Pohled", "Správa", "Výstup", "Zaměření", "Autodesk 360", "Nápověda", "Doplňky add–in", "Express Tools", "CAD Studio"];
        return `
        <style>
            :host { display: flex; align-items: flex-end; height: 20px; flex: none; background: #9f9f9f; padding-left: 4px; }
            button { height: 18px; padding: 0 11px 1px 10px; color: #333; }
            button:first-of-type { background: linear-gradient(#f4f4f4, #fff); border-radius: 2px 2px 0 0; }
            button.fold { gap: 4px; padding-left: 22px; }
        </style>
        ${tabs.map(t => `<button type="button" role="tab">${t}</button>`).join("")}
        <button type="button" class="fold" aria-label="Minimalizovat">${icon("panelup", 15)}${icon("down", 10)}</button>
        `;
    }
}

class CadRibbon extends CadElement {
    view() {
        const tool = (name, text = "", arrow = "") => `<cad-tool icon="${name}" ${arrow ? "arrow" : ""} ${text ? "" : "plain"}>${text}</cad-tool>`;
        return `
        <style>
            :host { display: flex; height: 102px; flex: none; background: #f4f4f4; }
            .grid { display: grid; grid-auto-flow: column; grid-template-rows: repeat(3, 24px); }
            .on { background: linear-gradient(#c3defa, #a9d0f5); border: 1px solid #1d66a8; }
            .big { width: 90px; height: 72px; flex-direction: column; padding-top: 4px; gap: 3px; color: #333; text-align: center; white-space: normal; line-height: 15px; }
            .start { display: flex; gap: 1px; margin-left: -2px; }
            .start .grid button { width: 24px; height: 23px; justify-content: center; }
            #tools { width: 146px; }
            #data { width: 171px; }
            #design { width: 356px; }
            #design .grid { grid-template-columns: 118px 70px 150px; }
            #views { width: 185px; }
            #views .grid { padding-left: 5px; }
            #draw { width: 118px; }
            #draw .grid { grid-template-columns: 37px 40px 30px; }
            #modify { width: 301px; }
            #modify .grid { grid-template-columns: 94px 76px 96px 20px; }
            #layers { width: 303px; }
            #layers .big { width: 56px; }
            .layer { display: flex; gap: 3px; margin-left: -4px; }
            .combo { display: flex; align-items: center; height: 22px; width: 207px; gap: 3px; border: 1px solid #ccc; background: linear-gradient(#fff, #eee); padding: 0 3px; }
            .combo select { flex: 1; padding-left: 2px; font-size: 12px; }
            .line { display: flex; gap: 7px; align-items: center; height: 24px; padding-left: 3px; }
            .combo + .line { margin-top: 2px; }
            .line button:last-child { gap: 6px; color: #444; }
            #clip { width: 80px; border-right: 0; }
            #clip .big { width: 44px; gap: 2px; }
            .clip { display: flex; gap: 7px; }
            .rest { flex: 1; height: 80px; background: linear-gradient(90deg, #d6d6d6, #bdbdbd); }
        </style>
        <cad-panel id="tools">
            <div class="start">
                <button type="button" class="big on">${icon("tools", 30)}Prostor nástrojů</button>
                <div class="grid">
                    <button type="button" class="on" aria-label="Prospektor">${icon("ts1", 17)}</button>
                    <button type="button" class="on" aria-label="Průzkum">${icon("survey", 17)}</button>
                    <button type="button" aria-label="Panorama">${icon("pano", 15)}</button>
                    <button type="button" class="on" aria-label="Nastavení">${icon("ts2", 17)}</button>
                    <button type="button" class="on" aria-label="Sada nástrojů">${icon("toolbox", 15)}</button>
                    <button type="button" aria-label="Vlastnosti">${icon("propsw", 15)}</button>
                </div>
            </div>
        </cad-panel>
        <cad-panel id="data"><div class="grid">
            ${tool("import", "Importovat data zaměření")}${tool("points", "Body", 1)}${tool("surfaces", "Povrchy", 1)}
        </div></cad-panel>
        <cad-panel id="design"><div class="grid">
            ${tool("parcel", "Parcela", 1)}${tool("feature", "Návrhová linie", 1)}${tool("grading", "Zemní těleso", 1)}
            ${tool("align", "Trasa", 1)}${tool("profile", "Profil", 1)}${tool("corridor", "Koridor")}
            ${tool("intersect", "Křižovatky", 1)}${tool("assembly", "Šablona typických řezů", 1)}${tool("pipes", "Potrubní síť", 1)}
        </div></cad-panel>
        <cad-panel id="views"><div class="grid">
            ${tool("profview", "Zobrazení profilu", 1)}${tool("sample", "Stopy příčných řezů")}${tool("secview", "Zobrazení příčných řezů", 1)}
        </div></cad-panel>
        <cad-panel id="draw"><div class="grid">
            ${tool("line", "", 1)}${tool("div", "", 1)}${tool("spline", "", 1)}
            ${tool("arc", "", 1)}${tool("circle", "", 1)}${tool("ellipse", "", 1)}
            ${tool("pline")}${tool("rect", "", 1)}${tool("hatch", "", 1)}
        </div></cad-panel>
        <cad-panel id="modify" label="Upravit"><div class="grid">
            ${tool("move", "Posun")}${tool("copy", "Kopírovat")}${tool("stretch", "Protáhnout")}
            ${tool("rotate", "Otočit")}${tool("mirror", "Zrcadlit")}${tool("scale", "Měřítko")}
            ${tool("trim", "Oříznout", 1)}${tool("fillet", "Zaoblit", 1)}${tool("array", "Pole", 1)}
            ${tool("erase")}${tool("explode")}${tool("offset")}
        </div></cad-panel>
        <cad-panel id="layers" label="Hladiny"><div class="layer">
            <button type="button" class="big on">${icon("layprops", 30)}<span>Vlastnosti hladiny</span></button>
            <div>
                <div class="combo">${icon("bulb")}${icon("sun")}${icon("lockb")}${icon("white", 14)}
                    <select aria-label="Hladina"><option>0</option></select>${icon("down", 13)}</div>
                <div class="line">${["l1", "l2", "l3", "l4"].map(n => iconButton(n, 17)).join("")}<button type="button">${icon("l5", 17)}Nastavit jako aktuální</button></div>
                <div class="line">${["m1", "m2", "m3", "m4"].map(n => iconButton(n, 17)).join("")}<button type="button">${icon("m5", 17)}Přizpůsobit hladinu</button></div>
            </div>
        </div></cad-panel>
        <cad-panel id="clip"><div class="clip">
            <button type="button" class="big">${icon("paste", 32)}Vložit${icon("down", 9)}</button>
            <div class="grid">${tool("cut")}${tool("copyclip")}${tool("match")}</div>
        </div></cad-panel>
        <div class="rest"></div>
        `;
    }
}

// docked toolbar with a grip on the left and a small close mark on the right
class CadToolbar extends CadElement {
    view() {
        const icons = this.attr("icons").split(" ");
        return `
        <style>
            :host { display: flex; align-items: center; height: 24px; gap: 7px; background: #efefef; border: 2px solid #74777d; border-width: 2px 0 1px 2px; width: max-content; }
            .grip { width: 9px; align-self: stretch; margin-right: -6px; background: radial-gradient(circle, #111 1px, #aeb1b6 1px) 0 0 / 4px 3px; }
            .end { width: 9px; align-self: stretch; margin-left: -5px; background: #9aa3b0; color: #fff; justify-content: center; align-items: flex-start; font-size: 10px; line-height: 8px; }
            .sep { width: 1px; height: 18px; background: #777; margin: 0 -1px; }
        </style>
        <span class="grip"></span>
        ${icons.map(n => n === "|" ? '<span class="sep"></span>' : n === "slot" ? "<slot></slot>" : iconButton(n)).join("")}
        <button type="button" class="end" aria-label="Zavřít">×</button>
        `;
    }
}

class CadLayerCombo extends CadElement {
    view() {
        return `
        <style>
            :host { display: flex; align-items: center; gap: 2px; width: 298px; height: 20px; border: 1px solid #777; border-radius: 2px; background: linear-gradient(#fafafa, #d9d9d9); padding: 0 2px; margin-left: -2px; }
            select { flex: 1; padding-left: 2px; color: #000; }
        </style>
        ${icon("bulb", 15)}${icon("sun", 15)}${icon("vp", 15)}${icon("lockb", 15)}${icon("white", 12)}
        <select aria-label="Aktuální hladina"><option>0</option></select>${icon("down", 13)}
        `;
    }
}

// narrow vertical caption of a palette
class CadStrip extends CadElement {
    view() {
        const pin = this.attr("pin");
        return `
        <style>
            :host { display: flex; flex-direction: column; align-items: center; width: 22px; background: #e6e6e6; border: 1px solid #a4a4a4; border-radius: 4px; color: #666; padding: 5px 0 3px; }
            .top { display: flex; flex-direction: column; gap: 9px; align-items: center; }
            .name { margin-top: auto; margin-bottom: 10px; writing-mode: vertical-rl; transform: rotate(180deg); font-size: 12px; white-space: nowrap; color: #555; }
        </style>
        ${pin ? `<div class="top">${iconButton("x", 10)}${iconButton(pin, 10)}${iconButton("gear", 10)}</div>` : ""}
        <span class="name"><slot></slot></span>${icon(this.attr("icon"), 14)}
        `;
    }
}

class LayerPalette extends CadElement {
    view() {
        const filters = ["Body", "Koridor &amp; Křižovatka", "Parcely", "Podélné profily", "Potrubí", "Povrchy", "Příčné řezy", "Stopy příčných řezů", "Tabulky", "Trasy", "Všechny C3D hladiny", "Všechny použité hladiny", "Zemní těleso"];
        const heads = ["Stav", "Název", "Z...", "Zm...", "Z...", "Barva", "Typ čáry", "Tloušťka ...", "Průhle...", "Styl vy...", "V...", "Z...", "Popis", ""];
        const widths = [51, 173, 24, 41, 31, 48, 64, 73, 55, 53, 25, 24, 218];
        const row = name => `<tr>
            <td class="state-icon">${icon("status", 15)}</td><td class="name">${name}</td><td class="mid">${icon("rowbulb", 14)}</td><td class="mid">${icon("sun", 15)}</td><td class="mid">${icon("lock", 15)}</td>
            <td><span>${icon("white", 13)}bílá</span></td><td>Continu...</td><td><span><i></i>Vých...</span></td><td>0</td><td class="dim">Barva_7</td>
            <td class="mid">${icon("printer", 12)}</td><td class="mid">${icon("vpfreeze", 14)}</td><td>${name}</td><td></td></tr>`;
        return `
        <style>
            :host { display: flex; background: #e6e6e6; border: 1px solid #999; border-left: 0; border-radius: 4px; color: #000; }
            cad-strip { border-width: 0 0 0 1px; }
            .frame { flex: 1; min-width: 0; margin: 2px 2px 2px 0; border: 1px solid #999; border-radius: 4px; background: #f0f0f0; display: flex; flex-direction: column; padding: 5px 5px 3px 2px; }
            header { display: flex; align-items: center; height: 18px; }
            header > span { padding: 8px 0 0 29px; flex: 1; }
            .find { display: flex; align-items: center; width: 124px; height: 17px; background: #f8f8f8; }
            .find input { flex: 1; min-width: 0; padding-left: 2px; }
            .find input::placeholder { color: #555; opacity: 1; }
            .tools { display: flex; align-items: center; gap: 7px; height: 16px; margin: 9px 0 8px; padding: 0 8px 0 3px; color: #777; }
            .sep { width: 8px; height: 18px; border: solid #777; border-width: 0 1px; margin: 0 -1px; }
            .fill { flex: 1; }
            .main { flex: 1; display: flex; gap: 3px; min-height: 0; }
            aside { width: 200px; flex: none; display: flex; flex-direction: column; border: 1px solid #999; }
            .bar { height: 21px; display: flex; align-items: center; justify-content: space-between; padding: 0 1px 0 5px; border-bottom: 1px solid #999; }
            .tree { flex: 1; padding: 3px 0 0 5px; }
            .foot { display: flex; align-items: center; gap: 4px; height: 23px; border-top: 1px solid #999; padding: 0 1px 0 4px; }
            .foot label { flex: 1; }
            .foot input { width: 13px; height: 13px; appearance: none; border: 1px solid #888; background: linear-gradient(135deg, #c8ccd4, #fff); outline: 1px solid #fff; outline-offset: -2px; }
            ul { list-style: none; margin: 0; padding: 0; }
            .root { display: flex; align-items: center; gap: 5px; height: 16px; }
            .root cad-icon:first-child { margin-right: -2px; }
            .tree ul { margin-left: 24px; border-left: 1px dotted #999; height: 201px; }
            li { display: flex; align-items: center; gap: 6px; height: 16px; }
            li::before { content: ""; width: 6px; border-top: 1px dotted #999; }
            .list { flex: 1; min-width: 0; background: linear-gradient(#ddd, #ddd) 224px 0 / 1px 100% no-repeat; }
            table { border-collapse: collapse; table-layout: fixed; width: 100%; }
            th { height: 23px; background: #fcfcfc; text-align: left; font-weight: normal; padding: 0 0 0 5px; border-right: 1px solid #e0dce4; white-space: nowrap; position: relative; }
            th .sort { position: absolute; right: 3px; top: 9px; border: solid transparent; border-width: 0 4px 5px; border-bottom-color: #999; }
            td { height: 18px; padding: 0 0 0 4px; white-space: nowrap; overflow: hidden; }
            td.state-icon { padding-left: 1px; }
            td.mid { padding: 0; }
            td.mid cad-icon { margin: 0 auto; }
            td span { display: flex; align-items: center; gap: 4px; }
            td i { width: 24px; height: 1px; background: #000; margin-left: -2px; }
            .dim { color: #888; }
            .state { height: 16px; margin: 12px 0 4px 4px; }
        </style>
        <cad-strip icon="layers" pin="pin">LAYER PROPERTIES MANAGER</cad-strip>
        <div class="frame">
            <header><span>Aktuální hladina: 0 : 0</span>
                <div class="find"><input type="search" aria-label="Najít hladinu" placeholder="Najít hladinu">${icon("search", 13)}</div></header>
            <div class="tools">
                ${["t1", "t2", "t3", "t4", "save"].map(n => iconButton(n)).join("")}<span class="sep"></span>
                ${["n1", "n2", "n3", "n4", "n5"].map(n => iconButton(n)).join("")}<span class="fill"></span>
                ${iconButton("refresh", 14)}${iconButton("gear", 14)}
            </div>
            <div class="main">
                <aside>
                    <div class="bar">Filtry${iconButton("dbl", 14)}</div>
                    <div class="tree">
                        <div class="root">${icon("minusbox", 14)}${icon("layers", 15)}Vše</div>
                        <ul>${filters.map((f, i) => `<li>${icon(i === 2 ? "folderok" : "folder", 14)}${f}</li>`).join("")}</ul>
                    </div>
                    <div class="foot"><input type="checkbox" id="inv"><label for="inv">Inverzní filtr</label>${iconButton("dbl", 14)}</div>
                </aside>
                <div class="list"><table>
                    <colgroup>${widths.map(w => `<col style="width:${w}px">`).join("")}<col></colgroup>
                    <thead><tr>${heads.map((h, i) => `<th>${h}${i === 1 ? '<span class="sort"></span>' : ""}</th>`).join("")}</tr></thead>
                    <tbody>${row("C3D-BOD")}${row("C3D-BOD-POPIS")}${row("C3D-BOD-TAB")}</tbody>
                </table></div>
            </div>
            <div class="state">Parcely: zobrazeno 3 hladin z celkem 134 hladin</div>
        </div>
        `;
    }
}

class PropertiesPalette extends CadElement {
    view() {
        const groups = [
            ["Obecné", ["Barva", '<b></b>DleHlad'], ["Hladina", "0"], ["Typ čáry", "<i></i>DleHlad"], ["Měřítko ty...", "1.0000"], ["Tloušťka č...", "<i></i>DleHlad"], ["Průhlednost", "DleHlad"], ["Tloušťka", "0.0000"]],
            ["3D Vizualizace", ["Materiál", "DleHlad"], ["Zobrazení...", "Vrhá a přijímá s..."]],
            ["Styl vykreslování", ["Styl vykresl...", "DleBarvy", 1], ["Tabulka st...", "Žádné"], ["Tabulka vy...", "Model", 1], ["Typ tabulk...", "Není dostupný", 1]],
            ["Zobrazit", ["Střed X", "-786053.0915", 1], ["Střed Y", "-987076.1733", 1], ["Střed Z", "0.0000", 1], ["Výška", "87.0535", 1], ["Šířka", "156.3527", 1]],
            ["Různé", ["Měřítko po...", "1:1000"], ["Ikona USS...", "Ano"], ["Ikona USS...", "Ano"], ["USS zvlášť...", "Ano"], ["Název USS", ""], ["Vizuální styl", "2D drátový mo..."]]
        ];
        return `
        <style>
            :host { display: flex; color: #111; }
            .tabs { width: 19px; margin-top: 3px; display: flex; flex-direction: column; }
            .tabs button { height: 121px; width: 21px; justify-content: center; background: #e4e4e4; border: 1px solid #999; border-top: 0; border-radius: 4px 0 0 4px; color: #666; position: relative; }
            .tabs button:first-child { background: #f0f0f0; border-right: 0; color: #111; width: 23px; z-index: 1; }
            .tabs span { writing-mode: vertical-rl; transform: rotate(180deg); }
            .outer { flex: 1; background: #e6e6e6; border: 1px solid #aaa; border-radius: 4px; padding: 2px; }
            .inner { height: 100%; border: 1px solid #999; border-radius: 4px; background: #f0f0f0; padding: 12px 19px 0 11px; }
            .head { display: flex; align-items: center; gap: 8px; margin: 0 -12px 3px -5px; height: 24px; }
            .pick { display: flex; align-items: center; width: 137px; height: 24px; border: 1px solid #aaa; border-radius: 2px; background: #fff; }
            .pick select { flex: 1; padding-left: 3px; height: 22px; }
            .pick div { display: flex; align-items: center; height: 22px; border-left: 1px solid #aaa; padding: 0 2px; color: #888; }
            table { width: 100%; border-collapse: collapse; table-layout: fixed; margin-bottom: 2px; }
            caption { height: 20px; text-align: left; font-weight: bold; background: #dedede; border: 1px solid #999; padding: 1px 6px; line-height: 16px; color: #000; }
            caption button { float: right; height: 16px; font-weight: bold; color: #444; }
            th, td { height: 19px; padding: 0 0 0 3px; border: 1px solid #e6e6e6; font-weight: normal; text-align: left; white-space: nowrap; }
            th { width: 96px; padding-left: 23px; }
            td span { display: flex; align-items: center; gap: 6px; }
            td.dim { color: #888; }
            i { width: 41px; height: 1px; background: #000; margin-left: 2px; }
            b { width: 10px; height: 10px; border: 1px solid #000; border-radius: 2px; background: #fff; }
        </style>
        <div class="tabs">${["Návrh", "Zobrazení", "Rozšířená data", "Třída objektu"].map(t => `<button type="button" role="tab"><span>${t}</span></button>`).join("")}</div>
        <div class="outer"><div class="inner">
            <div class="head">
                <div class="pick"><select aria-label="Výběr"><option>Žádný výběr</option></select><div>${icon("down", 9)}</div></div>
                ${iconButton("pick")}${iconButton("sel", 15)}${iconButton("qsel")}
            </div>
            ${groups.map(([name, ...rows]) => `<table><caption>${name}<button type="button">–</button></caption>
                ${rows.map(([k, v, dim]) => `<tr><th scope="row">${k}</th><td class="${dim ? "dim" : ""}"><span>${v}</span></td></tr>`).join("")}</table>`).join("")}
        </div></div>
        `;
    }
}

class CommandLine extends CadElement {
    view() {
        return `
        <style>
            :host { display: flex; height: 63px; flex: none; border-top: 2px solid #f4f4f4; font: 12px/15px "Liberation Mono", monospace; color: #111; }
            .side { width: 23px; background: linear-gradient(#888 30%, #444 70%); display: flex; flex-direction: column; align-items: center; gap: 12px; padding-top: 4px; color: #fff; }
            .dots { width: 18px; height: 5px; background: radial-gradient(circle, #ccc 1px, transparent 1px) 0 0 / 3px 3px; }
            .side svg { width: 9px; height: 9px; }
            .text { flex: 1; min-width: 0; border: 1px solid #777; border-left-color: #999; }
            .log { height: 37px; background: #c8c8c8; padding: 5px 0 0; white-space: nowrap; overflow: hidden; }
            form { display: flex; align-items: center; gap: 3px; height: 22px; background: #fff; border-top: 1px solid #777; margin: 0; padding-left: 4px; color: #666; }
            input { flex: 1; }
            input::placeholder { font-style: italic; color: #999; }
        </style>
        <div class="side"><span class="dots"></span>
            <svg viewBox="0 0 10 10" stroke="#fff" stroke-width="2"><path d="M1 1l8 8M9 1L1 9"/></svg>${icon("wrench", 14)}</div>
        <div class="text">
            <div class="log"><div>Příkaz: +HLADINA</div><div>Určete filtr [Vše/Povrchy/Zemní těleso/Potrubí/Koridor &amp; Křižovatka/Trasy/Tabulky/Příčné řezy/Podélné profily/Stopy příčných řezů/Všechny C3D hladiny/Body/Parcely/Všechny použité hladiny/Nesjednocené nové hladiny] &lt;Vše&gt;: parcely</div></div>
            <form>${icon("prompt", 14)}${icon("down", 8)}<input aria-label="Příkaz" placeholder="Zadejte příkaz"></form>
        </div>
        `;
    }
}

class StatusBar extends CadElement {
    view() {
        return `
        <style>
            :host { display: flex; justify-content: space-between; height: 29px; flex: none; background: #b2b2b2; position: relative; }
            .tabs { display: flex; height: 18px; padding-left: 5px; }
            .tabs button { height: 18px; padding: 0 12px 0 14px; color: #777; background: #ddd; clip-path: polygon(0 0, 100% 0, calc(100% - 5px) 100%, 8px 100%); margin-right: -3px; }
            .tabs button:first-child { background: #fff; color: #000; font-weight: bold; padding: 0 15px 0 18px; }
            .tabs button:last-child { padding: 0 10px; }
            .right { width: 668px; display: flex; align-items: center; justify-content: flex-end; gap: 8px; background: #efefef; border: solid #ccc; border-width: 2px 0; padding-right: 6px; color: #000; }
            .right > span { display: flex; align-items: center; gap: 10px; }
            .right .pair { gap: 8px; }
            .right .coord { margin-right: 4px; }
            .right > span:last-child { gap: 13px; }
            .gear { color: #555; }
            cad-toolbar { position: absolute; left: 758px; top: 2px; border-width: 2px; }
        </style>
        <div class="tabs"><button type="button">Model</button><button type="button">Layout1</button><button type="button">Layout2</button><button type="button" aria-label="Nový">${icon("add", 10)}</button></div>
        <div class="right">
            <span class="coord">263, -987111.6255, 0.0000</span><span>MODELP</span>
            <span class="pair">${iconButton("snap", 15)}${icon("down", 12)}</span>
            <span class="pair">${iconButton("lw")}${icon("down", 12)}</span>
            <span>${iconButton("cyc", 14)}${iconButton("annb", 15)}${iconButton("anna", 15)}${iconButton("ann", 15)}</span>
            <span class="pair">1:1000${icon("down", 12)}</span>
            <span class="pair gear">${iconButton("gear", 12)}${icon("down", 12)}</span>
            <span>${iconButton("plus", 14)}${iconButton("iso")}${iconButton("burger")}</span>
        </div>
        <cad-toolbar icons="b1 b2 b3 b4 b5 b6 b7 cross cross cross2 cross3 b8 b9 | cross2 | b10 b11 b12 | b13 b14 b15 b16 b17 b18 b19"></cad-toolbar>
        `;
    }
}

class TaskBar extends CadElement {
    view() {
        const task = (name, text, on = "") => `<button type="button" class="task ${on}">${icon(name)}${text}</button>`;
        return `
        <style>
            :host { display: flex; align-items: center; height: 30px; flex: none; background: #8094aa; border-top: 1px solid #3c4a5a; box-shadow: inset 0 1px #b8c4d2; color: #fff; padding-left: 11px; }
            .start { margin-right: 18px; }
            .task { width: 159px; height: 28px; padding: 0 9px; gap: 7px; margin-right: 3px; border: 1px solid #4d5c6e; border-radius: 3px; box-shadow: inset 0 0 0 1px #b9c5d2; background: linear-gradient(#a3b2c2, #7f91a6 50%, #8b9cb0); }
            .on { background: linear-gradient(110deg, #d3dbe4, #93a4b7); }
            .pin { width: 46px; justify-content: center; }
            .tray { margin-left: auto; display: flex; align-items: center; height: 29px; gap: 8px; }
            .tray > span { margin-right: 6px; }
            .tray > cad-icon { margin-right: 6px; }
            .tray time { margin: 0 12px 0 15px; }
            .show { width: 13px; height: 28px; border: 1px solid #3c4a5a; background: linear-gradient(135deg, #a8b6c6, #56677b); }
        </style>
        <button type="button" class="start" aria-label="Start">${icon("orb", 30)}</button>
        ${task("outlook", "Doručená pošta - Wi...")}${task("chrome", "Doručená pošta (3) - ...")}${task("floppy", "Total Commander (x...")}
        <button type="button" class="pin" aria-label="Writer">${icon("writer")}</button><button type="button" class="pin" aria-label="Calc">${icon("calc")}</button>
        ${task("logo", "Autodesk AutoCAD ...", "on")}${task("notepad", "Bez názvu – Poznám...")}
        <div class="tray"><span>CS</span>${icon("up", 12)}${["dropbox", "mail", "avg", "sync", "net", "sound"].map(n => iconButton(n)).join("")}
            <time>10:15</time><button type="button" class="show" aria-label="Plocha"></button></div>
        `;
    }
}

class CadApp extends CadElement {
    view() {
        return `
        <style>
            :host { display: flex; flex-direction: column; height: 100vh; position: relative; }
            main { flex: 1; background: #000; position: relative; }
            .cursor { position: absolute; left: 1018px; top: 778px; width: 97px; height: 97px; }
            layer-palette { position: absolute; left: 0; top: 148px; width: 1128px; height: 637px; }
            .toolspace { position: absolute; left: 0; top: 784px; height: 197px; }
            .docks { position: absolute; right: 0; top: 75px; display: flex; flex-direction: column; align-items: flex-end; }
            .docks cad-toolbar { height: 23px; }
            .extref { position: absolute; right: 0; top: 169px; height: 891px; }
            properties-palette { position: absolute; right: 21px; top: 296px; width: 253px; height: 760px; }
        </style>
        <cad-title></cad-title>
        <cad-tabs></cad-tabs>
        <cad-ribbon></cad-ribbon>
        <main>
            <svg class="cursor" viewBox="0 0 97 97" stroke="#fff" fill="none"><path d="M48.500 0v45M48.500 52v45M0 48.500h45M52 48.500h45"/><rect x="45.500" y="45.500" width="6" height="6"/></svg>
        </main>
        <command-line></command-line>
        <status-bar></status-bar>
        <task-bar></task-bar>
        <cad-strip class="toolspace" icon="logo">TOOLSPACE</cad-strip>
        <layer-palette></layer-palette>
        <div class="docks">
            <cad-toolbar icons="o1 o2 o3 o4"></cad-toolbar>
            <cad-toolbar icons="q1 q2 q3 q4 q5"></cad-toolbar>
            <cad-toolbar icons="m5 l6 l2 l7 l8 l9 | l3 l1 l4 m4"></cad-toolbar>
            <cad-toolbar icons="l10 slot l5 l11 l12"><layer-combo></layer-combo></cad-toolbar>
        </div>
        <cad-strip class="extref" icon="extref" pin="pin2">EXTERNÍ REFERENCE</cad-strip>
        <properties-palette></properties-palette>
        `;
    }
}

customElements.define('cad-icon', CadIcon)
customElements.define('cad-tool', CadTool)
customElements.define('cad-panel', CadPanel)
customElements.define('cad-title', CadTitle)
customElements.define('cad-tabs', CadTabs)
customElements.define('cad-ribbon', CadRibbon)
customElements.define('cad-toolbar', CadToolbar)
customElements.define('layer-combo', CadLayerCombo)
customElements.define('cad-strip', CadStrip)
customElements.define('layer-palette', LayerPalette)
customElements.define('properties-palette', PropertiesPalette)
customElements.define('command-line', CommandLine)
customElements.define('status-bar', StatusBar)
customElements.define('task-bar', TaskBar)
customElements.define('cad-app', CadApp)
</script>
</body>
</html>
